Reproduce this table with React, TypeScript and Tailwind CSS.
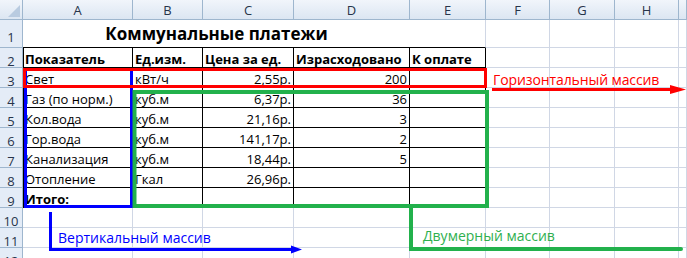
import React from "react";

const COLS = [110, 70, 91, 116, 76, 64, 65, 64, 8];
const LETTERS = ["A", "B", "C", "D", "E", "F", "G", "H", ""];
const FONT = { fontFamily: '"Open Sans", "Noto Sans", sans-serif' };

type CellDef = { t?: string; r?: boolean; b?: boolean };

const DATA: CellDef[][] = [
  [{ t: "Показатель", b: true }, { t: "Ед.изм.", b: true }, { t: "Цена за ед.", b: true }, { t: "Израсходовано", b: true }, { t: "К оплате", b: true }],
  [{ t: "Свет" }, { t: "кВт/ч" }, { t: "2,55р.", r: true }, { t: "200", r: true }, {}],
  [{ t: "Газ (по норм.)" }, { t: "куб.м" }, { t: "6,37р.", r: true }, { t: "36", r: true }, {}],
  [{ t: "Кол.вода" }, { t: "куб.м" }, { t: "21,16р.", r: true }, { t: "3", r: true }, {}],
  [{ t: "Гор.вода" }, { t: "куб.м" }, { t: "141,17р.", r: true }, { t: "2", r: true }, {}],
  [{ t: "Канализация" }, { t: "куб.м" }, { t: "18,44р.", r: true }, { t: "5", r: true }, {}],
  [{ t: "Отопление" }, { t: "Гкал" }, { t: "26,96р.", r: true }, {}, {}],
  [{ t: "Итого:", b: true }, {}, {}, {}, {}],
];

function RowHeader({ n, h }: { n: number; h: number }) {
  return (
    <div
      className="flex shrink-0 w-[23px] justify-center items-center pt-[7px] border-r border-b border-[#9eb6ce] bg-[#e4ecf7] text-[13px] leading-[13px] text-[#27344a]"
      style={{ height: h }}
    >
      {n}
    </div>
  );
}

function Cell({ w, def, inTable, first }: { w: number; def?: CellDef; inTable: boolean; first: boolean }) {
  const border = inTable
    ? "border-r border-b border-black" + (first ? " border-l pl-[1px]" : " pl-[2px]")
    : "border-r border-b border-[#d0d7e5] pl-[2px]";
  return (
    <div
      className={`flex shrink-0 h-[20px] items-end pb-[1px] pr-[2px] whitespace-nowrap text-[13px] leading-[13px] text-black ${border} ${
        def?.r ? "justify-end" : "justify-start"
      } ${def?.b ? "font-bold" : ""}`}
      style={{ width: w }}
    >
      {def?.t ?? ""}
    </div>
  );
}

export default function App() {
  return (
    <div className="relative w-[687px] h-[258px] overflow-hidden bg-white" style={FONT}>
      {/* column headers */}
      <div className="flex h-[20px]">
        <div className="relative w-[23px] shrink-0 border-r border-b border-[#9eb6ce] bg-linear-to-b from-[#f1f5fb] to-[#dce6f2]">
          <svg className="absolute right-[2px] bottom-[2px]" width="12" height="12" viewBox="0 0 12 12">
            <polygon points="12,0 12,12 0,12" fill="#b9cbe0" />
          </svg>
        </div>
        {COLS.map((w, i) => (
          <div
            key={i}
            className="flex shrink-0 justify-center items-center pt-[2px] border-r border-b border-[#9eb6ce] bg-linear-to-b from-[#f1f5fb] to-[#dce6f2] text-[13px] leading-[13px] text-[#27344a]"
            style={{ width: w }}
          >
            {LETTERS[i]}
          </div>
        ))}
      </div>

      {/* row 1 */}
      <div className="flex h-[28px]">
        <RowHeader n={1} h={28} />
        <div
          className="flex shrink-0 justify-center items-end pb-[5px] border-b border-black font-bold text-[17px] leading-[17px] text-black whitespace-nowrap"
          style={{ width: COLS[0] + COLS[1] + COLS[2] + COLS[3] }}
        >
          Коммунальные платежи
        </div>
        {COLS.slice(4).map((w, i) => (
          <div
            key={i}
            className={`shrink-0 border-r border-b ${i === 0 ? "border-black border-r-[#d0d7e5]" : "border-[#d0d7e5]"}`}
            style={{ width: w }}
          />
        ))}
      </div>

      {/* rows 2-12 */}
      {Array.from({ length: 11 }).map((_, ri) => {
        const rowNum = ri + 2;
        const rowData = DATA[ri];
        return (
          <div key={ri} className="flex h-[20px]">
            <RowHeader n={rowNum} h={20} />
            {COLS.map((w, ci) => (
              <Cell key={ci} w={w} def={rowData ? rowData[ci] : undefined} inTable={!!rowData && ci < 5} first={ci === 0} />
            ))}
          </div>
        );
      })}

      {/* annotations */}
      <svg className="pointer-events-none absolute left-0 top-0" width="687" height="258" viewBox="0 0 687 258">
        {/* blue vertical array */}
        <rect x="25.5" y="69.5" width="106" height="137" fill="none" stroke="#0000ff" strokeWidth="3" />
        <polyline points="50.5,212 50.5,249.5 292,249.5" fill="none" stroke="#0000ff" strokeWidth="3" />
        <polygon points="291,245.5 302,249.5 291,253.5" fill="#0000ff" />
        {/* green two-dimensional array */}
        <rect x="134.5" y="92" width="352.5" height="114" fill="none" stroke="#22b14c" strokeWidth="4" />
        <polyline points="411,206 411,249 681,249" fill="none" stroke="#22b14c" strokeWidth="4" strokeLinecap="round" />
        {/* red horizontal array */}
        <rect x="24.5" y="69.5" width="461" height="17" fill="none" stroke="#ff0000" strokeWidth="3" />
        <polyline points="492,89.5 672,89.5" fill="none" stroke="#ff0000" strokeWidth="3" />
        <polygon points="670,85 686,89.5 670,94" fill="#ff0000" />
      </svg>

      <div className="absolute left-[493px] top-[73px] text-[14px] leading-[14px] text-[#ff0000] whitespace-nowrap tracking-[-0.1px]">
        Горизонтальный массив
      </div>
      <div className="absolute left-[58px] top-[231px] text-[14px] leading-[14px] text-[#0000ff] whitespace-nowrap">
        Вертикальный массив
      </div>
      <div className="absolute left-[423px] top-[229px] text-[14px] leading-[14px] text-[#2fb04f] whitespace-nowrap">
        Двумерный массив
      </div>
    </div>
  );
}
